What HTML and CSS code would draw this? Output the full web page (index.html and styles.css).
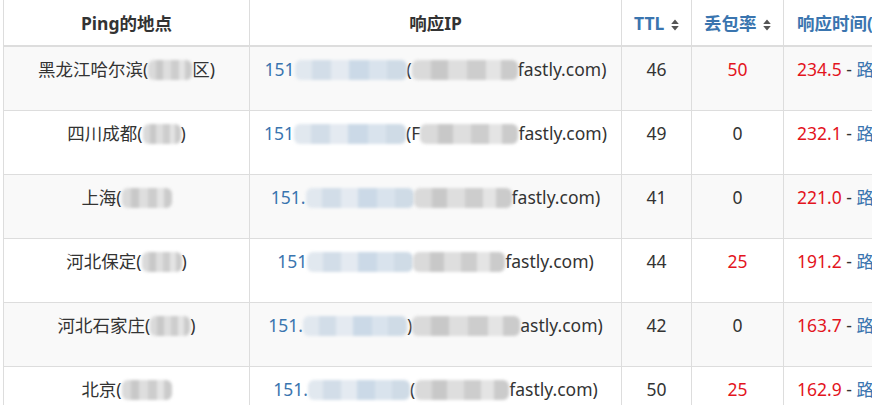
FILE: index.html
```html
<!DOCTYPE html>
<html lang="zh-CN">
<head>
<meta charset="utf-8">
<title>Ping</title>
<link rel="stylesheet" href="styles.css">
</head>
<body>
<div class="wrap">
<table class="ping">
  <colgroup>
    <col class="c-loc"><col class="c-ip"><col class="c-ttl"><col class="c-loss"><col class="c-time">
  </colgroup>
  <thead>
    <tr>
      <th>Ping的地点</th>
      <th>响应IP</th>
      <th class="sort">TTL <svg class="si" viewBox="0 0 8 12"><path d="M4 0.5 L7.8 5 L0.2 5 Z M4 11.5 L7.8 7 L0.2 7 Z"/></svg></th>
      <th class="sort">丢包率 <svg class="si" viewBox="0 0 8 12"><path d="M4 0.5 L7.8 5 L0.2 5 Z M4 11.5 L7.8 7 L0.2 7 Z"/></svg></th>
      <th class="sort left">响应时间(ms) <svg class="si" viewBox="0 0 8 12"><path d="M4 0.5 L7.8 5 L0.2 5 Z M4 11.5 L7.8 7 L0.2 7 Z"/></svg></th>
    </tr>
  </thead>
  <tbody>
    <tr>
      <td>黑龙江哈尔滨(<span class="mz g w44"></span>区)</td>
      <td><span class="ip">151</span><span class="mz b w112"></span>(<span class="mz g w106"></span>fastly.com)</td>
      <td>46</td>
      <td class="red">50</td>
      <td class="left"><span class="red">234.5</span> - <span class="ip">路由跟踪</span></td>
    </tr>
    <tr>
      <td>四川成都(<span class="mz g w38"></span>)</td>
      <td><span class="ip">151</span><span class="mz b w112"></span>(F<span class="mz g w98"></span>fastly.com)</td>
      <td>49</td>
      <td>0</td>
      <td class="left"><span class="red">232.1</span> - <span class="ip">路由跟踪</span></td>
    </tr>
    <tr>
      <td>上海(<span class="mz g w50"></span></td>
      <td><span class="ip">151.</span><span class="mz b w108"></span><span class="mz g w98"></span>fastly.com)</td>
      <td>41</td>
      <td>0</td>
      <td class="left"><span class="red">221.0</span> - <span class="ip">路由跟踪</span></td>
    </tr>
    <tr>
      <td>河北保定(<span class="mz g w40"></span>)</td>
      <td><span class="ip">151</span><span class="mz b w106"></span><span class="mz g w92"></span>fastly.com)</td>
      <td>44</td>
      <td class="red">25</td>
      <td class="left"><span class="red">191.2</span> - <span class="ip">路由跟踪</span></td>
    </tr>
    <tr>
      <td>河北石家庄(<span class="mz g w40"></span>)</td>
      <td><span class="ip">151.</span><span class="mz b w104"></span>)<span class="mz g w108"></span>astly.com)</td>
      <td>42</td>
      <td>0</td>
      <td class="left"><span class="red">163.7</span> - <span class="ip">路由跟踪</span></td>
    </tr>
    <tr>
      <td>北京(<span class="mz g w50"></span></td>
      <td><span class="ip">151.</span><span class="mz b w102"></span>(<span class="mz g w94"></span>fastly.com)</td>
      <td>50</td>
      <td class="red">25</td>
      <td class="left"><span class="red">162.9</span> - <span class="ip">路由跟踪</span></td>
    </tr>
  </tbody>
</table>
</div>
</body>
</html>
```
FILE: styles.css
```css
html, body {
  margin: 0;
  padding: 0;
  background: #fff;
}
body {
  overflow: hidden;
  width: 872px;
  height: 405px;
  font-family: "Noto Sans", "Noto Sans CJK SC", sans-serif;
  font-size: 17.5px;
  color: #333;
}
.wrap {
  padding-left: 3px;
}
.ping {
  border-collapse: collapse;
  table-layout: fixed;
  width: 1000px;
}
.c-loc { width: 246px; }
.c-ip { width: 372px; }
.c-ttl { width: 70px; }
.c-loss { width: 92px; }
.c-time { width: 220px; }

.ping th, .ping td {
  border: 1px solid #ddd;
  text-align: center;
  white-space: nowrap;
  overflow: hidden;
}
.ping th {
  border-top: 0;
  border-bottom: 2px solid #ddd;
  padding: 12px 8px 10px;
  line-height: 23px;
  font-weight: bold;
  color: #333;
}
.ping th.sort {
  color: #3a75af;
}
.ping .left {
  text-align: left;
  padding-left: 13px;
}
.si {
  width: 8px;
  height: 12px;
  fill: #555;
  vertical-align: -1px;
  margin-left: 2px;
}
.ping td {
  padding: 11px 8px 29px;
  line-height: 23px;
  vertical-align: top;
}
.ping tbody tr:nth-child(odd) td {
  background: #f9f9f9;
}
.ip {
  color: #3a75af;
}
.red {
  color: #e3141d;
}
.mz {
  display: inline-block;
  height: 20px;
  vertical-align: -4px;
  filter: blur(1.6px);
  border-radius: 6px;
}
.mz.g {
  background: linear-gradient(90deg, #dadada 0 18%, #c8c8c8 18% 34%, #dedede 34% 52%, #cdcdcd 52% 70%, #e4e4e4 70% 84%, #cbcbcb 84% 100%);
}
.mz.b {
  background: linear-gradient(90deg, #e1e8ef 0 15%, #d2dde8 15% 32%, #e4eaf1 32% 48%, #cbd9e7 48% 66%, #d9e3ed 66% 82%, #cfdbe6 82% 100%);
}
.w38 { width: 38px; }
.w40 { width: 40px; }
.w44 { width: 44px; }
.w50 { width: 50px; }
.w92 { width: 92px; }
.w94 { width: 94px; }
.w98 { width: 98px; }
.w102 { width: 102px; }
.w104 { width: 104px; }
.w106 { width: 106px; }
.w108 { width: 108px; }
.w112 { width: 112px; }
```
